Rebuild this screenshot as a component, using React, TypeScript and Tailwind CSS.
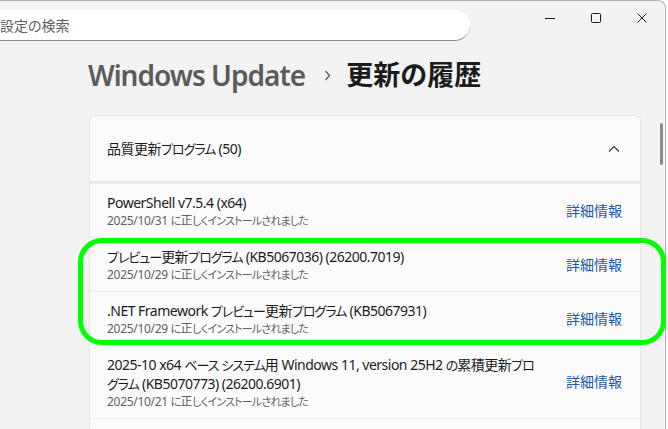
import * as React from "react";

type UpdateItem = {
  lines: string[];
  date: string;
};

const items: UpdateItem[] = [
  { lines: ["PowerShell v7.5.4 (x64)"], date: "2025/10/31" },
  { lines: ["プレビュー更新プログラム (KB5067036) (26200.7019)"], date: "2025/10/29" },
  { lines: [".NET Framework プレビュー更新プログラム (KB5067931)"], date: "2025/10/29" },
  {
    lines: [
      "2025-10 x64 ベース システム用 Windows 11, version 25H2 の累積更新プロ",
      "グラム (KB5070773) (26200.6901)",
    ],
    date: "2025/10/21",
  },
];

// かなは UI フォントに合わせて詰めて表示する
function Kana({ text, kanaClass }: { text: string; kanaClass: string }) {
  const parts = text.split(/([\u3040-\u30ff]+)/);
  return (
    <>
      {parts.map((part, i) =>
        i % 2 === 1 ? (
          <span key={i} className={kanaClass}>
            {part}
          </span>
        ) : (
          <React.Fragment key={i}>{part}</React.Fragment>
        )
      )}
    </>
  );
}

function WindowControls() {
  return (
    <div className="flex h-[34px] text-[#1b1b1b]">
      <div className="flex w-[46px] items-center justify-center">
        <svg width="10" height="10" viewBox="0 0 10 10">
          <path d="M0 5.5h10" stroke="currentColor" strokeWidth="1" />
        </svg>
      </div>
      <div className="flex w-[46px] items-center justify-center">
        <svg width="10" height="10" viewBox="0 0 10 10">
          <rect x="0.5" y="0.5" width="9" height="9" rx="1" fill="none" stroke="currentColor" strokeWidth="1" />
        </svg>
      </div>
      <div className="flex w-[46px] items-center justify-center">
        <svg width="10" height="10" viewBox="0 0 10 10">
          <path d="M0.5 0.5l9 9M9.5 0.5l-9 9" stroke="currentColor" strokeWidth="1" />
        </svg>
      </div>
    </div>
  );
}

function UpdateRow({ item }: { item: UpdateItem }) {
  return (
    <div className="flex items-center justify-between border-t border-[#ececec] bg-[#fbfbfb] py-[8.5px] pl-[17px] pr-[18px]">
      <div className="flex flex-col">
        {item.lines.map((line) => (
          <span key={line} className="h-[19px] whitespace-nowrap text-[14px] leading-[19px] tracking-[-0.5px] text-[#1b1b1b]">
            <Kana text={line} kanaClass="text-[13px] tracking-[-1px]" />
          </span>
        ))}
        <span className="h-[17px] whitespace-nowrap text-[12px] leading-[17px] tracking-[-0.3px] text-[#616161]">
          <Kana text={`${item.date} に正しくインストールされました`} kanaClass="text-[11px] tracking-[-0.8px]" />
        </span>
      </div>
      <a className="shrink-0 text-[14px] leading-[20px] text-[#1c59a6]">詳細情報</a>
    </div>
  );
}

export default function App() {
  return (
    <div className="relative h-[429px] w-[668px] overflow-hidden bg-white font-['Noto_Sans','Noto_Sans_CJK_JP',sans-serif] [font-feature-settings:'palt']">
      <div className="h-[429px] w-[666px] rounded-tr-[8px] border-t border-r border-[#b4b4b4] bg-[#f3f3f3]">
        {/* タイトルバー */}
        <div className="flex h-[48px] items-start justify-between">
          <div className="mt-[9px] flex h-[31px] w-[470px] items-center rounded-r-[16px] border-b border-[#8a8a8a] bg-white">
            <span className="text-[14px] text-[#5f5f5f]">設定の検索</span>
          </div>
          <WindowControls />
        </div>

        {/* 見出し */}
        <div className="ml-[88px] mt-[6px] flex h-[40px] items-center">
          <span className="text-[28px] font-semibold tracking-[-1px] text-[#5b5b5b]">Windows Update</span>
          <svg className="ml-[19px] mr-[15px]" width="7" height="11" viewBox="0 0 7 11">
            <path d="M1.5 1l4 4.5-4 4.5" fill="none" stroke="#5b5b5b" strokeWidth="1.3" />
          </svg>
          <span className="text-[27px] font-bold text-[#1b1b1b] [font-feature-settings:normal]">更新の履歴</span>
        </div>

        {/* 品質更新プログラム */}
        <div className="ml-[89px] mt-[20px] w-[552px] overflow-hidden rounded-t-[6px] border border-b-0 border-[#e5e5e5]">
          <div className="flex h-[67px] items-center justify-between border-b-2 border-[#e8e8e8] bg-[#fbfbfb] pl-[17px] pr-[20px]">
            <span className="text-[14px] tracking-[-0.5px] text-[#1b1b1b]">
              <Kana text="品質更新プログラム (50)" kanaClass="text-[13px] tracking-[-1px]" />
            </span>
            <svg width="12" height="8" viewBox="0 0 12 8">
              <path d="M1 6.5l5-5 5 5" fill="none" stroke="#3a3a3a" strokeWidth="1.2" />
            </svg>
          </div>
          {items.map((item) => (
            <UpdateRow key={item.lines[0]} item={item} />
          ))}
          <div className="h-[20px] border-t border-[#ececec] bg-[#fbfbfb]" />
        </div>
      </div>

      {/* スクロールバー */}
      <div className="absolute right-[5px] top-[123px] h-[42px] w-[3px] rounded-full bg-[#8a8a8a]" />

      {/* 強調枠 */}
      <div className="pointer-events-none absolute left-[78px] top-[238px] h-[107px] w-[588px] rounded-[24px] border-[5px] border-[#00ff00]" />
    </div>
  );
}
